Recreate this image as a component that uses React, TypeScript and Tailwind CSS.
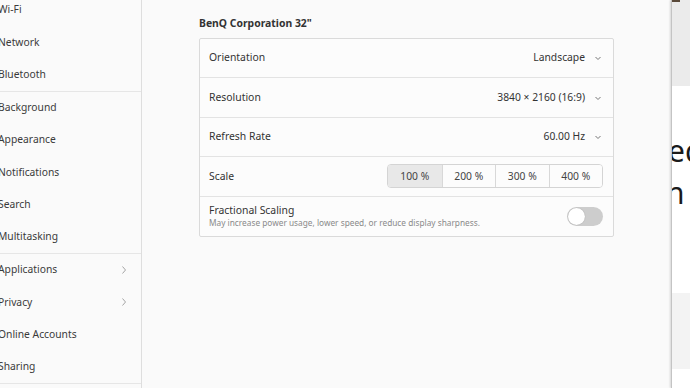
import { FC } from "react";

const font = { fontFamily: '"Noto Sans", "Open Sans", sans-serif' };

const groups: { label: string; more?: boolean }[][] = [
  [{ label: "Wi-Fi" }, { label: "Network" }, { label: "Bluetooth" }],
  [
    { label: "Background" },
    { label: "Appearance" },
    { label: "Notifications" },
    { label: "Search" },
    { label: "Multitasking" },
  ],
  [
    { label: "Applications", more: true },
    { label: "Privacy", more: true },
    { label: "Online Accounts" },
    { label: "Sharing" },
  ],
];

const Chevron: FC<{ dir: "down" | "right"; className?: string }> = ({ dir, className }) => (
  <svg width="10" height="10" viewBox="0 0 10 10" className={className}>
    {dir === "down" ? (
      <path d="M2.5 4 L5 6.5 L7.5 4" fill="none" stroke="currentColor" strokeWidth="1" />
    ) : (
      <path d="M3.5 1.5 L6.5 5 L3.5 8.5" fill="none" stroke="currentColor" strokeWidth="0.9" />
    )}
  </svg>
);

const Sidebar: FC = () => (
  <aside className="w-[142px] shrink-0 border-r border-[#dedede] bg-[#fafafa] overflow-hidden">
    <div className="-mt-[6px]">
      {groups.map((g, i) => (
        <div key={i} className="border-b border-[#e6e6e6]">
          {g.map((item) => (
            <div
              key={item.label}
              className="h-[32.25px] flex items-center justify-between pr-[12px] -ml-[2px] text-[10.3px] text-[#3a3a3a]"
            >
              <span>{item.label}</span>
              {item.more && <Chevron dir="right" className="text-[#9a9a9a]" />}
            </div>
          ))}
        </div>
      ))}
    </div>
  </aside>
);

const SelectRow: FC<{ label: string; value: string }> = ({ label, value }) => (
  <div className="h-[39.4px] flex items-center justify-between pl-[9px] pr-[10px] border-b border-[#e3e3e3]">
    <span className="text-[10.4px] text-[#333]">{label}</span>
    <div className="flex items-center gap-[6px] text-[10.3px] text-[#333]">
      <span>{value}</span>
      <Chevron dir="down" className="text-[#777] ml-[2px]" />
    </div>
  </div>
);

const Panel: FC = () => (
  <main className="flex-1 bg-[#fafafa] pl-[57px] pr-[57px] pt-[15px]">
    <h2 className="text-[10.4px] font-bold text-[#333] h-[16px] leading-[16px] mb-[7px]">
      BenQ Corporation 32"
    </h2>
    <div className="border border-[#dadada] rounded-[2px] bg-[#fcfcfc]">
      <SelectRow label="Orientation" value="Landscape" />
      <SelectRow label="Resolution" value="3840 × 2160 (16:9)" />
      <SelectRow label="Refresh Rate" value="60.00 Hz" />
      <div className="h-[39.4px] flex items-center justify-between pl-[9px] pr-[10px] border-b border-[#e3e3e3]">
        <span className="text-[10.4px] text-[#333]">Scale</span>
        <div className="flex h-[24px] border border-[#d4d4d4] rounded-[4px] overflow-hidden text-[10.3px] text-[#444]">
          {["100 %", "200 %", "300 %", "400 %"].map((s, i) => (
            <div
              key={s}
              className={`w-[53.5px] flex items-center justify-center ${i > 0 ? "border-l border-[#d8d8d8]" : ""} ${
                i === 0 ? "bg-[#e8e8e8]" : "bg-[#fcfcfc]"
              }`}
            >
              {s}
            </div>
          ))}
        </div>
      </div>
      <div className="h-[39.4px] flex items-center justify-between pl-[9px] pr-[10px]">
        <div className="flex flex-col">
          <span className="text-[10.4px] leading-[13px] text-[#333]">Fractional Scaling</span>
          <span className="text-[8.3px] leading-[11px] text-[#8a8a8a]">
            May increase power usage, lower speed, or reduce display sharpness.
          </span>
        </div>
        <div className="w-[36px] h-[19px] rounded-full bg-[#cdcdcd] p-[1px] flex items-center">
          <div className="w-[17px] h-[17px] rounded-full bg-white shadow-[0_0_1px_rgba(0,0,0,0.3)]" />
        </div>
      </div>
    </div>
  </main>
);

const OtherWindow: FC = () => (
  <div className="w-[19px] shrink-0 flex flex-col bg-white border-l border-[#c4c4c4] shadow-[-1px_0_2px_rgba(0,0,0,0.15)] overflow-hidden">
    <div className="h-[86px] shrink-0 bg-[#ebebeb] relative">
      <div className="absolute top-0 left-0 w-[8px] h-[2px] bg-[#5a4a3a]" />
    </div>
    <div className="pt-[44px] whitespace-nowrap text-[30px] leading-[42px] text-[#1a1a1a]" style={font}>
      <div className="-ml-[4px]">ed</div>
      <div className="-ml-[6px]">
        n <span className="bg-[#f0f0f0] text-[#333]">t</span>
      </div>
    </div>
    <div className="mt-[79px] h-[76px] shrink-0 bg-[#f3f3f3]" />
  </div>
);

const App: FC = () => {
  return (
    <div className="w-[690px] h-[388px] flex overflow-hidden" style={font}>
      <Sidebar />
      <Panel />
      <OtherWindow />
    </div>
  );
};

export default App;
